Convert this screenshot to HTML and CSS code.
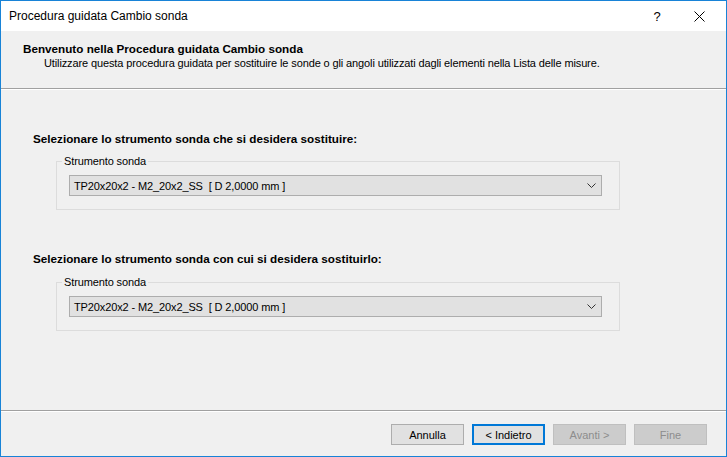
FILE: index.html
```html
<html lang="it">
<head>
    <meta charset="UTF-8">
    <title>Procedura guidata Cambio sonda</title>
    <link rel="stylesheet" href="styles.css">
</head>
<body>
    <div class="window">
        <div class="titlebar">
            <span class="title">Procedura guidata Cambio sonda</span>
            <span class="help">?</span>
            <span class="close">
                <svg width="11" height="11" viewBox="0 0 11 11"><path d="M0.5 0.5 L10.5 10.5 M10.5 0.5 L0.5 10.5" stroke="#000" stroke-width="1" fill="none"/></svg>
            </span>
        </div>

        <div class="header">
            <div class="header-title">Benvenuto nella Procedura guidata Cambio sonda</div>
            <div class="header-sub">Utilizzare questa procedura guidata per sostituire le sonde o gli angoli utilizzati dagli elementi nella Lista delle misure.</div>
        </div>

        <div class="content">
            <div class="section">
                <div class="section-label">Selezionare lo strumento sonda che si desidera sostituire:</div>
                <fieldset class="group">
                    <legend>Strumento sonda</legend>
                    <div class="combo">
                        <span>TP20x20x2 - M2_20x2_SS&nbsp; [ D 2,0000 mm ]</span>
                        <svg class="chevron" width="9" height="5" viewBox="0 0 9 5"><path d="M0.5 0.5 L4.5 4.5 L8.5 0.5" stroke="#333" stroke-width="1" fill="none"/></svg>
                    </div>
                </fieldset>
            </div>

            <div class="section">
                <div class="section-label">Selezionare lo strumento sonda con cui si desidera sostituirlo:</div>
                <fieldset class="group">
                    <legend>Strumento sonda</legend>
                    <div class="combo">
                        <span>TP20x20x2 - M2_20x2_SS&nbsp; [ D 2,0000 mm ]</span>
                        <svg class="chevron" width="9" height="5" viewBox="0 0 9 5"><path d="M0.5 0.5 L4.5 4.5 L8.5 0.5" stroke="#333" stroke-width="1" fill="none"/></svg>
                    </div>
                </fieldset>
            </div>
        </div>

        <div class="footer">
            <button class="btn">Annulla</button>
            <button class="btn btn-default">&lt; Indietro</button>
            <button class="btn" disabled>Avanti &gt;</button>
            <button class="btn" disabled>Fine</button>
        </div>
    </div>
</body>
</html>
```

FILE: styles.css
```css
body {
    margin: 0;
    font-family: "Liberation Sans", Arial, sans-serif;
    font-size: 11px;
    letter-spacing: -0.12px;
    color: #000;
    background: #f0f0f0;
}

.window {
    width: 727px;
    height: 457px;
    box-sizing: border-box;
    border: 1px solid #1883d7;
    display: flex;
    flex-direction: column;
    background: #f0f0f0;
}

/* title bar */
.titlebar {
    height: 30px;
    background: #fff;
    display: flex;
    align-items: center;
    padding-left: 8px;
    flex-shrink: 0;
    letter-spacing: 0;
}

.title {
    font-size: 12px;
    flex: 1;
}

.help {
    font-size: 13px;
    width: 38px;
    text-align: center;
}

.close {
    width: 46px;
    margin-right: 4px;
    display: flex;
    justify-content: center;
}

/* header */
.header {
    height: 58px;
    box-sizing: border-box;
    padding: 10px 0 0 22px;
    border-bottom: 1px solid #a0a0a0;
    box-shadow: 0 1px 0 #fff;
    flex-shrink: 0;
}

.header-title {
    font-weight: bold;
    font-size: 11.7px;
    letter-spacing: 0;
    line-height: 15px;
}

.header-sub {
    padding-left: 21px;
    line-height: 15px;
}

/* content */
.content {
    flex: 1;
    padding: 41px 0 0 32px;
    margin-top: 1px;
}

.section {
    margin-bottom: 41px;
}

.section-label {
    font-weight: bold;
    font-size: 11.7px;
    letter-spacing: 0;
    line-height: 15px;
}

.group {
    width: 564px;
    box-sizing: border-box;
    margin: 9px 0 0 23px;
    padding: 7px 17px 13px 12px;
    border: 1px solid #dcdcdc;
}

.section + .section .group {
    margin-top: 10px;
}

.group legend {
    padding: 0 2px;
    margin-left: -7px;
    line-height: 13px;
}

.combo {
    height: 21px;
    box-sizing: border-box;
    border: 1px solid #adadad;
    background: #e1e1e1;
    display: flex;
    align-items: center;
    padding: 0 4px;
}

.combo span {
    flex: 1;
}

.chevron {
    margin-right: 1px;
}

/* footer */
.footer {
    height: 46px;
    box-sizing: border-box;
    border-top: 1px solid #a0a0a0;
    box-shadow: inset 0 1px 0 #fff;
    display: flex;
    justify-content: flex-end;
    align-items: flex-start;
    gap: 8px;
    padding: 13px 19px 0 0;
    flex-shrink: 0;
}

.btn {
    width: 73px;
    height: 21px;
    box-sizing: border-box;
    border: 1px solid #adadad;
    background: #e1e1e1;
    font-family: inherit;
    font-size: 11px;
    color: #000;
    padding: 0;
}

.btn-default {
    border: 2px solid #0078d7;
}

.btn:disabled {
    background: #cccccc;
    border-color: #bfbfbf;
    color: #8d8d8d;
}
```
